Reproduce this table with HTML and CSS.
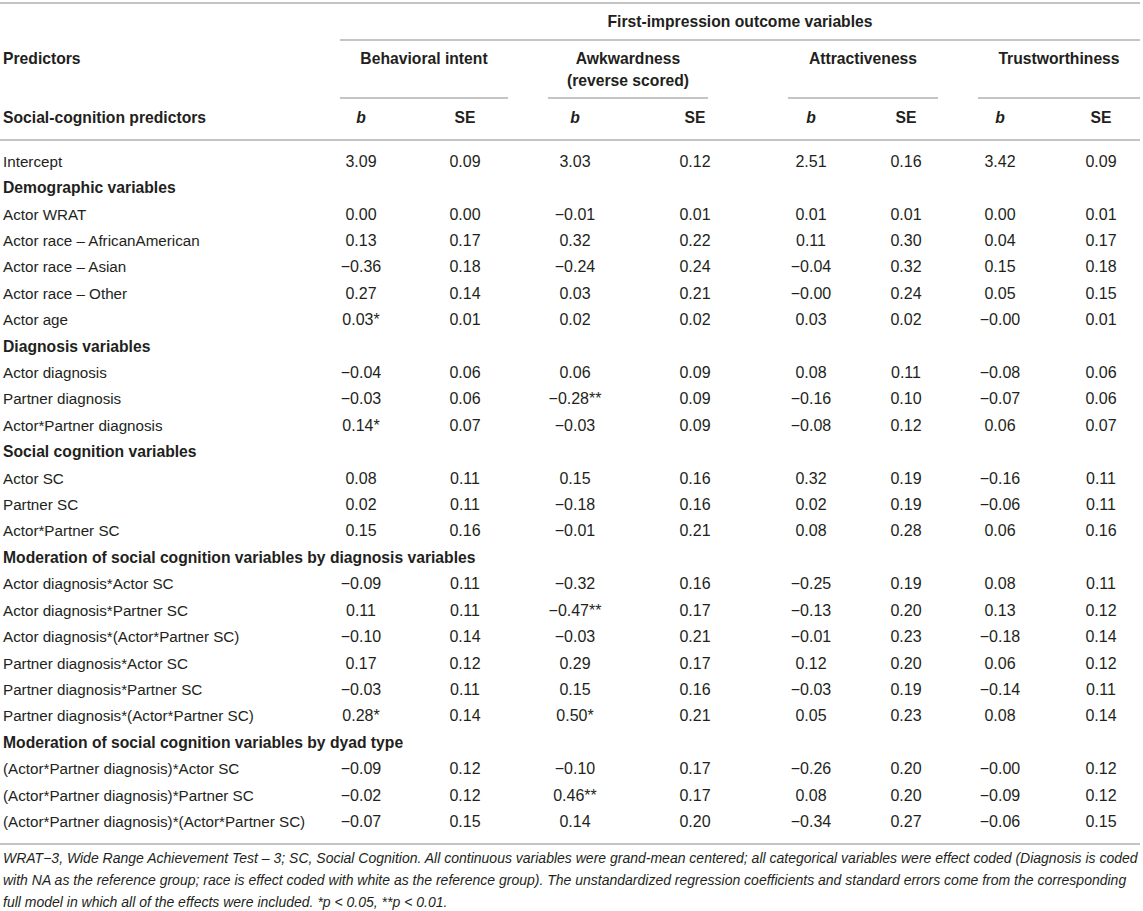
FILE: index.html
```html
<!DOCTYPE html>
<html lang="en">
<head>
<meta charset="utf-8">
<title>First-impression outcome variables</title>
<link rel="stylesheet" href="styles.css">
</head>
<body>
<div class="table">
  <div class="row head-a">
    <div class="cell"></div>
    <div class="group group-all"><div class="group-label">First-impression outcome variables</div></div>
  </div>
  <div class="row head-b">
    <div class="cell pred-head">Predictors</div>
    <div class="group group-2"><div class="group-label">Behavioral intent</div></div>
    <div class="group group-2 group-narrow"><div class="group-label">Awkwardness (reverse scored)</div></div>
    <div class="group group-2"><div class="group-label">Attractiveness</div></div>
    <div class="group group-2"><div class="group-label">Trustworthiness</div></div>
  </div>
  <div class="row head-c">
    <div class="cell pred-head">Social-cognition predictors</div>
    <div class="cell num"><i>b</i></div><div class="cell num">SE</div>
    <div class="cell num"><i>b</i></div><div class="cell num">SE</div>
    <div class="cell num"><i>b</i></div><div class="cell num">SE</div>
    <div class="cell num"><i>b</i></div><div class="cell num">SE</div>
  </div>
  <div class="body">
    <div class="row"><div class="cell">Intercept</div><div class="cell num">3.09</div><div class="cell num">0.09</div><div class="cell num">3.03</div><div class="cell num">0.12</div><div class="cell num">2.51</div><div class="cell num">0.16</div><div class="cell num">3.42</div><div class="cell num">0.09</div></div>
    <div class="row"><div class="cell section">Demographic variables</div></div>
    <div class="row"><div class="cell">Actor WRAT</div><div class="cell num">0.00</div><div class="cell num">0.00</div><div class="cell num">−0.01</div><div class="cell num">0.01</div><div class="cell num">0.01</div><div class="cell num">0.01</div><div class="cell num">0.00</div><div class="cell num">0.01</div></div>
    <div class="row"><div class="cell">Actor race – AfricanAmerican</div><div class="cell num">0.13</div><div class="cell num">0.17</div><div class="cell num">0.32</div><div class="cell num">0.22</div><div class="cell num">0.11</div><div class="cell num">0.30</div><div class="cell num">0.04</div><div class="cell num">0.17</div></div>
    <div class="row"><div class="cell">Actor race – Asian</div><div class="cell num">−0.36</div><div class="cell num">0.18</div><div class="cell num">−0.24</div><div class="cell num">0.24</div><div class="cell num">−0.04</div><div class="cell num">0.32</div><div class="cell num">0.15</div><div class="cell num">0.18</div></div>
    <div class="row"><div class="cell">Actor race – Other</div><div class="cell num">0.27</div><div class="cell num">0.14</div><div class="cell num">0.03</div><div class="cell num">0.21</div><div class="cell num">−0.00</div><div class="cell num">0.24</div><div class="cell num">0.05</div><div class="cell num">0.15</div></div>
    <div class="row"><div class="cell">Actor age</div><div class="cell num">0.03*</div><div class="cell num">0.01</div><div class="cell num">0.02</div><div class="cell num">0.02</div><div class="cell num">0.03</div><div class="cell num">0.02</div><div class="cell num">−0.00</div><div class="cell num">0.01</div></div>
    <div class="row"><div class="cell section">Diagnosis variables</div></div>
    <div class="row"><div class="cell">Actor diagnosis</div><div class="cell num">−0.04</div><div class="cell num">0.06</div><div class="cell num">0.06</div><div class="cell num">0.09</div><div class="cell num">0.08</div><div class="cell num">0.11</div><div class="cell num">−0.08</div><div class="cell num">0.06</div></div>
    <div class="row"><div class="cell">Partner diagnosis</div><div class="cell num">−0.03</div><div class="cell num">0.06</div><div class="cell num">−0.28**</div><div class="cell num">0.09</div><div class="cell num">−0.16</div><div class="cell num">0.10</div><div class="cell num">−0.07</div><div class="cell num">0.06</div></div>
    <div class="row"><div class="cell">Actor*Partner diagnosis</div><div class="cell num">0.14*</div><div class="cell num">0.07</div><div class="cell num">−0.03</div><div class="cell num">0.09</div><div class="cell num">−0.08</div><div class="cell num">0.12</div><div class="cell num">0.06</div><div class="cell num">0.07</div></div>
    <div class="row"><div class="cell section">Social cognition variables</div></div>
    <div class="row"><div class="cell">Actor SC</div><div class="cell num">0.08</div><div class="cell num">0.11</div><div class="cell num">0.15</div><div class="cell num">0.16</div><div class="cell num">0.32</div><div class="cell num">0.19</div><div class="cell num">−0.16</div><div class="cell num">0.11</div></div>
    <div class="row"><div class="cell">Partner SC</div><div class="cell num">0.02</div><div class="cell num">0.11</div><div class="cell num">−0.18</div><div class="cell num">0.16</div><div class="cell num">0.02</div><div class="cell num">0.19</div><div class="cell num">−0.06</div><div class="cell num">0.11</div></div>
    <div class="row"><div class="cell">Actor*Partner SC</div><div class="cell num">0.15</div><div class="cell num">0.16</div><div class="cell num">−0.01</div><div class="cell num">0.21</div><div class="cell num">0.08</div><div class="cell num">0.28</div><div class="cell num">0.06</div><div class="cell num">0.16</div></div>
    <div class="row"><div class="cell section">Moderation of social cognition variables by diagnosis variables</div></div>
    <div class="row"><div class="cell">Actor diagnosis*Actor SC</div><div class="cell num">−0.09</div><div class="cell num">0.11</div><div class="cell num">−0.32</div><div class="cell num">0.16</div><div class="cell num">−0.25</div><div class="cell num">0.19</div><div class="cell num">0.08</div><div class="cell num">0.11</div></div>
    <div class="row"><div class="cell">Actor diagnosis*Partner SC</div><div class="cell num">0.11</div><div class="cell num">0.11</div><div class="cell num">−0.47**</div><div class="cell num">0.17</div><div class="cell num">−0.13</div><div class="cell num">0.20</div><div class="cell num">0.13</div><div class="cell num">0.12</div></div>
    <div class="row"><div class="cell">Actor diagnosis*(Actor*Partner SC)</div><div class="cell num">−0.10</div><div class="cell num">0.14</div><div class="cell num">−0.03</div><div class="cell num">0.21</div><div class="cell num">−0.01</div><div class="cell num">0.23</div><div class="cell num">−0.18</div><div class="cell num">0.14</div></div>
    <div class="row"><div class="cell">Partner diagnosis*Actor SC</div><div class="cell num">0.17</div><div class="cell num">0.12</div><div class="cell num">0.29</div><div class="cell num">0.17</div><div class="cell num">0.12</div><div class="cell num">0.20</div><div class="cell num">0.06</div><div class="cell num">0.12</div></div>
    <div class="row"><div class="cell">Partner diagnosis*Partner SC</div><div class="cell num">−0.03</div><div class="cell num">0.11</div><div class="cell num">0.15</div><div class="cell num">0.16</div><div class="cell num">−0.03</div><div class="cell num">0.19</div><div class="cell num">−0.14</div><div class="cell num">0.11</div></div>
    <div class="row"><div class="cell">Partner diagnosis*(Actor*Partner SC)</div><div class="cell num">0.28*</div><div class="cell num">0.14</div><div class="cell num">0.50*</div><div class="cell num">0.21</div><div class="cell num">0.05</div><div class="cell num">0.23</div><div class="cell num">0.08</div><div class="cell num">0.14</div></div>
    <div class="row"><div class="cell section">Moderation of social cognition variables by dyad type</div></div>
    <div class="row"><div class="cell">(Actor*Partner diagnosis)*Actor SC</div><div class="cell num">−0.09</div><div class="cell num">0.12</div><div class="cell num">−0.10</div><div class="cell num">0.17</div><div class="cell num">−0.26</div><div class="cell num">0.20</div><div class="cell num">−0.00</div><div class="cell num">0.12</div></div>
    <div class="row"><div class="cell">(Actor*Partner diagnosis)*Partner SC</div><div class="cell num">−0.02</div><div class="cell num">0.12</div><div class="cell num">0.46**</div><div class="cell num">0.17</div><div class="cell num">0.08</div><div class="cell num">0.20</div><div class="cell num">−0.09</div><div class="cell num">0.12</div></div>
    <div class="row"><div class="cell">(Actor*Partner diagnosis)*(Actor*Partner SC)</div><div class="cell num">−0.07</div><div class="cell num">0.15</div><div class="cell num">0.14</div><div class="cell num">0.20</div><div class="cell num">−0.34</div><div class="cell num">0.27</div><div class="cell num">−0.06</div><div class="cell num">0.15</div></div>
  </div>
  <p class="footnote">WRAT−3, Wide Range Achievement Test – 3; SC, Social Cognition. All continuous variables were grand-mean centered; all categorical variables were effect coded (Diagnosis is coded with NA as the reference group; race is effect coded with white as the reference group). The unstandardized regression coefficients and standard errors come from the corresponding full model in which all of the effects were included. *p &lt; 0.05, **p &lt; 0.01.</p>
</div>
</body>
</html>
```

FILE: styles.css
```css
:root {
  --cols: 300px 122px 86px 134px 106px 126px 64px 124px 78px;
  --rule: #c4c4c4;
  --ink: #231f20;
}

html, body {
  margin: 0;
  padding: 0;
  background: #ffffff;
}

body {
  font-family: "Liberation Sans", Arial, Helvetica, sans-serif;
  font-size: 15.2px;
  color: var(--ink);
}

.table {
  width: 1140px;
  margin-top: 2px;
  border-top: 2px solid var(--rule);
}

.row {
  display: grid;
  grid-template-columns: var(--cols);
}

.cell {
  padding-left: 3px;
  white-space: nowrap;
}

.num {
  padding-left: 0;
  text-align: center;
  font-size: 16px;
}

/* header */
.head-a,
.head-b,
.head-c {
  font-weight: bold;
  font-size: 15.7px;
  line-height: 22px;
}

.head-c .num {
  font-size: 15.7px;
}

.group {
  display: flex;
  padding-left: 40px;
}

.group-all {
  grid-column: 2 / -1;
}

.group-2 {
  grid-column: span 2;
}

.group-narrow {
  padding-right: 40px;
}

.group-label {
  flex: 1;
  text-align: center;
  border-bottom: 2px solid var(--rule);
}

.head-a .group-label {
  padding: 7px 0 6px;
}

.head-b .group-label {
  padding: 7px 0 5px;
}

.head-b .pred-head {
  padding-top: 7px;
}

.head-c {
  border-bottom: 2px solid var(--rule);
}

.head-c .cell {
  padding-top: 8px;
  padding-bottom: 10px;
}

/* body */
.body {
  padding: 7.8px 0 8px;
  border-bottom: 2px solid var(--rule);
}

.body .row {
  line-height: 26.4px;
}

.section {
  grid-column: 1 / -1;
  font-weight: bold;
  font-size: 15.7px;
}

.footnote {
  margin: 0;
  padding: 2px 0 0 3px;
  font-size: 14px;
  line-height: 22px;
  font-style: italic;
}
```
